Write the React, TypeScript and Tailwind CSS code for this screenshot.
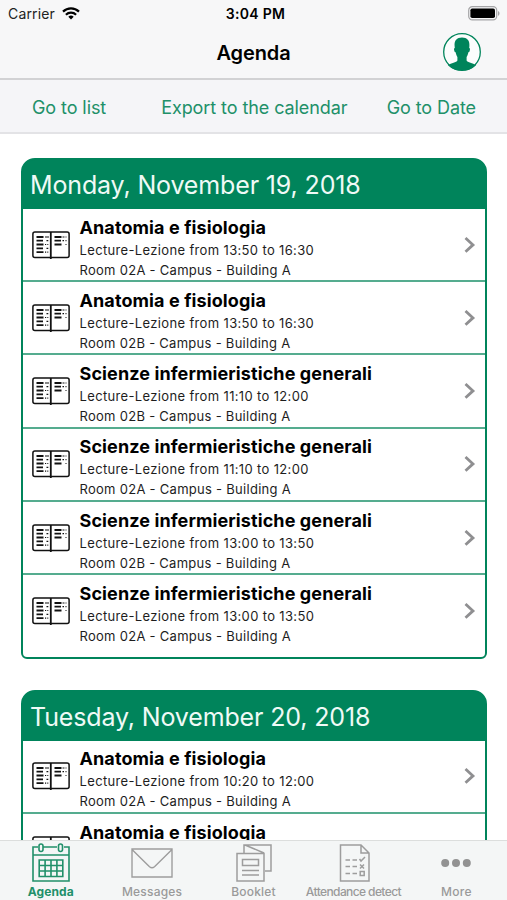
import type { ReactNode } from "react";

type Lecture = {
  title: string;
  time: string;
  room: string;
};

const monday: Lecture[] = [
  { title: "Anatomia e fisiologia", time: "13:50 to 16:30", room: "02A" },
  { title: "Anatomia e fisiologia", time: "13:50 to 16:30", room: "02B" },
  { title: "Scienze infermieristiche generali", time: "11:10 to 12:00", room: "02B" },
  { title: "Scienze infermieristiche generali", time: "11:10 to 12:00", room: "02A" },
  { title: "Scienze infermieristiche generali", time: "13:00 to 13:50", room: "02B" },
  { title: "Scienze infermieristiche generali", time: "13:00 to 13:50", room: "02A" },
];

// The second lecture runs under the tab bar
const tuesday: Lecture[] = [
  { title: "Anatomia e fisiologia", time: "10:20 to 12:00", room: "02A" },
  { title: "Anatomia e fisiologia", time: "", room: "" },
];

function WifiIcon() {
  return (
    <svg width="18" height="13" viewBox="0 0 18 13" fill="none" stroke="#000" strokeWidth="2.2">
      <path d="M1 4.6a11.5 11.5 0 0 1 16 0" />
      <path d="M3.9 7.7a7.3 7.3 0 0 1 10.2 0" />
      <path d="M9 12.4 6.3 9.7a3.9 3.9 0 0 1 5.4 0Z" fill="#000" stroke="none" />
    </svg>
  );
}

function BatteryIcon() {
  return (
    <svg width="32" height="15" viewBox="0 0 32 15">
      <rect x="0.7" y="0.7" width="28" height="13.2" rx="3.6" fill="#f7f7f8" stroke="#a5a5a7" strokeWidth="1.2" />
      <rect x="2.4" y="2.5" width="24.6" height="9.6" rx="1.8" fill="#000" />
      <path d="M30 5v4.8c2-.8 2-4 0-4.8Z" fill="#a5a5a7" />
    </svg>
  );
}

function ProfileIcon() {
  return (
    <svg width="40" height="40" viewBox="0 0 40 40">
      <circle cx="20" cy="20" r="18.3" fill="#fcfdfd" stroke="#00845b" strokeWidth="1.3" />
      <path
        d="M20 5.6c-5.2 0-7.8 3-7.4 8.400l.2 2c-1 .2-.9 1.400-.5 2.800.3 1 .7 1.500 1.400 1.500.3 2 .8 3.400 1.700 4.700v3.500c-.8 2.200-6.300 2.300-9.400 4.700A18.300 18.300 0 0 0 20 38.300a18.300 18.300 0 0 0 14-5.100c-3.100-2.400-8.600-2.500-9.400-4.700v-3.500c.9-1.300 1.400-2.700 1.700-4.700.7 0 1.100-.5 1.400-1.500.4-1.400.5-2.600-.5-2.800l.2-2c.4-5.400-2.200-8.400-7.400-8.400Z"
        fill="#00845b"
      />
    </svg>
  );
}

function BookIcon() {
  return (
    <svg className="shrink-0" width="38" height="28" viewBox="0 0 38 28" fill="none" stroke="#111">
      <rect x="0.9" y="0.9" width="36.2" height="25.6" rx="2" strokeWidth="1.5" />
      <path d="M18.8 1v27" strokeWidth="1.8" />
      <path d="M4.500 6h7M4.500 9.700h6.500M4.500 13.500h7M4.500 17.300h6.500M4.500 21.200h7M22.500 6h7M22.500 9.700h6.500M22.500 13.500h7" strokeWidth="1.8" />
      <path d="M13 6h4M14.500 9.700h1.800M13 13.500h1.200M15.300 13.500h1M14.500 17.300h1.800M13 21.200h1.200M15.300 21.200h1M30.500 6h2M33.500 6h1M30.500 9.700h1.500M33.500 9.700h1M33.500 13.500h1" strokeWidth="1.2" />
    </svg>
  );
}

function Chevron() {
  return (
    <svg className="ml-auto shrink-0" width="12" height="18" viewBox="0 0 12 18" fill="none" stroke="#8f8f91" strokeWidth="2.8">
      <path d="m1.500 2 7.500 6.900-7.500 6.900" />
    </svg>
  );
}

function LectureRow({ title, time, room }: Lecture) {
  return (
    <div className="flex h-[73.25px] shrink-0 border-b-2 border-[#55ac8f] bg-white px-[9px] last:h-[82px] last:rounded-b-[4px] last:border-b-0">
      <div className="flex h-[71.5px] w-full items-center">
        <BookIcon />
        <div className="ml-[9.5px] pt-[6px] whitespace-nowrap">
          <p className="text-[18px] leading-[24px] font-bold tracking-[0.1px] text-black">{title}</p>
          {time ? (
            <>
              <p className="text-[13px] leading-[20px] tracking-[0.35px] text-[#1d1d1d]">Lecture-Lezione from {time}</p>
              <p className="text-[13px] leading-[20px] tracking-[0.28px] text-[#1d1d1d]">Room {room} - Campus - Building A</p>
            </>
          ) : (
            <div className="h-[40px]" />
          )}
        </div>
        <Chevron />
      </div>
    </div>
  );
}

function DayCard({ date, lectures }: { date: string; lectures: Lecture[] }) {
  return (
    <section className="shrink-0 rounded-t-[14px] rounded-b-[6px] border-2 border-[#00845b] bg-[#00845b]">
      <h2 className="h-[48.75px] pl-[7px] text-[25px] leading-[50px] tracking-[-0.14px] whitespace-nowrap text-[#effaf6]">
        {date}
      </h2>
      {lectures.map((lecture, i) => (
        <LectureRow key={i} {...lecture} />
      ))}
    </section>
  );
}

function Tab({ label, children }: { label: ReactNode; children: ReactNode }) {
  return (
    <div className="flex flex-1 flex-col items-center">
      <div className="flex h-[43px] items-center">{children}</div>
      {label}
    </div>
  );
}

export default function App() {
  return (
    <div className="flex h-[900px] w-[507px] flex-col overflow-hidden bg-white font-['Inter',sans-serif] text-black">
      {/* Status bar */}
      <div className="grid h-[27px] shrink-0 grid-cols-3 items-center bg-[#f7f7f8] pr-[7px] pl-[8px]">
        <div className="flex items-center gap-[7px]">
          <span className="text-[14px] tracking-[0.15px] text-[#222]">Carrier</span>
          <WifiIcon />
        </div>
        <span className="pl-[3px] text-center text-[14px] font-semibold tracking-[0.3px]">3:04 PM</span>
        <div className="flex justify-end">
          <BatteryIcon />
        </div>
      </div>

      {/* Title */}
      <header className="grid h-[53px] shrink-0 grid-cols-3 items-center border-b-2 border-[#d2d2d4] bg-[#f7f7f8] px-[25px]">
        <span />
        <h1 className="text-center text-[20px] font-semibold tracking-[-0.1px]">Agenda</h1>
        <div className="flex justify-end pb-[2px]">
          <ProfileIcon />
        </div>
      </header>

      {/* Actions */}
      <nav className="flex h-[54px] shrink-0 items-center border-b-2 border-[#e3e3e6] bg-[#f5f5f8] pt-[3px] pr-[31px] pl-[32px] text-[18px] tracking-[-0.08px] whitespace-nowrap text-[#219069]">
        <button>Go to list</button>
        <button className="ml-[55px]">Export to the calendar</button>
        <button className="ml-auto">Go to Date</button>
      </nav>

      <main className="flex min-h-0 flex-1 flex-col gap-[30.75px] overflow-hidden pt-[24px] pr-[20px] pl-[21px]">
        <DayCard date="Monday, November 19, 2018" lectures={monday} />
        <DayCard date="Tuesday, November 20, 2018" lectures={tuesday} />
      </main>

      {/* Tab bar */}
      <nav className="flex h-[60px] shrink-0 border-t border-[#dcdedd] bg-[#f4f6f6] text-[12px] leading-[16px] font-medium whitespace-nowrap text-[#9a9a9a]">
        <Tab label={<span className="font-bold tracking-[0.1px] text-[#21906a]">Agenda</span>}>
          <svg width="40" height="40" viewBox="0 0 40 40" fill="none" stroke="#21906a" strokeWidth="1.6">
            <path d="M7 4H2v34h36V4h-5M12 4h14M2 12h36" />
            <rect x="8" y="1" width="4" height="7.5" rx="2" />
            <rect x="27.500" y="1" width="4" height="7.5" rx="2" />
            <path d="M8.200 17h23.600v16.500H8.200ZM14.100 17v16.500M20 17v16.500M25.900 17v16.500M8.200 22.500h23.600M8.200 28h23.600" />
          </svg>
        </Tab>
        <Tab label={<span className="tracking-[0.2px]">Messages</span>}>
          <svg width="42" height="30" viewBox="0 0 42 30" fill="none" stroke="#9d9d9d" strokeWidth="1.4">
            <path d="M1 1h40v28H1ZM1 1.500l17.500 17.300q2.500 2 5 0L41 1.500" />
          </svg>
        </Tab>
        <Tab label={<span className="tracking-[0.2px]">Booklet</span>}>
          <svg width="36" height="38" viewBox="0 0 36 38" fill="none" stroke="#9d9d9d" strokeWidth="1.5">
            <path d="M1 9.500h27v27.500H1ZM8 9V1h27v26h-6M9 1l19 8" />
            <path d="M6.500 15.500h16v6h-16ZM6 26.500h17M6 31h17" />
          </svg>
        </Tab>
        <Tab label={<span className="pr-[3px] tracking-[-0.6px]">Attendance detect</span>}>
          <svg width="32" height="38" viewBox="0 0 32 38" fill="none" stroke="#9d9d9d" strokeWidth="1.5">
            <path d="M1.500 1h20.500l8 8v28H1.500ZM22 1v8h8" />
            <path d="M6.500 16h4.500M13.500 16h4.500M6.500 22.500h4.500M13.500 22.500h4.500M6.500 29.500h4.500M13.500 29.500h4.500" />
            <path d="m20.500 15 1.500 2 4-4M21 20.500l4 4M25 20.500l-4 4M21.200 27.500h4v4h-4Z" />
          </svg>
        </Tab>
        <Tab label={<span className="tracking-[0.3px]">More</span>}>
          <svg width="30" height="8" viewBox="0 0 30 8" fill="#929292">
            <circle cx="4.2" cy="4" r="4" />
            <circle cx="15" cy="4" r="4" />
            <circle cx="25.8" cy="4" r="4" />
          </svg>
        </Tab>
      </nav>
    </div>
  );
}
